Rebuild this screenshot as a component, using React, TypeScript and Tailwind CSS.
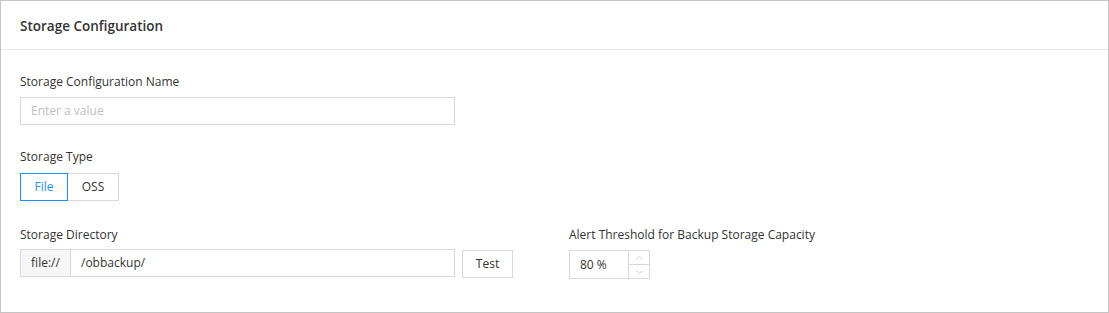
import React from "react";

export default function App() {
  return (
    <div
      className="w-[1109px] h-[313px] bg-white border border-[#c4c4c4] text-[12px] text-[#333]"
      style={{ fontFamily: '"Open Sans", "Noto Sans", sans-serif' }}
    >
      <div className="h-[49px] border-b border-[#e8e8e8] flex items-center pt-[2px] px-[19px]">
        <span className="text-[13.5px] font-semibold text-[#333]">Storage Configuration</span>
      </div>
      <div className="px-[19px] pt-[22px]">
        <div className="leading-[20px]">Storage Configuration Name</div>
        <div className="mt-[5px] w-[435px] h-[28px] border border-[#d9d9d9] flex items-center px-[10px] text-[#bfbfbf]">
          Enter a value
        </div>

        <div className="mt-[22px] leading-[20px]">Storage Type</div>
        <div className="mt-[6px] flex h-[28px]">
          <div className="w-[48px] border border-[#1890ff] text-[#1890ff] flex items-center justify-center">File</div>
          <div className="w-[51px] border border-l-0 border-[#d9d9d9] flex items-center justify-center">OSS</div>
        </div>

        <div className="mt-[24px] flex gap-[19px]">
          <div className="w-[530px]">
            <div className="leading-[20px]">Storage Directory</div>
            <div className="mt-[4px] flex items-start gap-[7px]">
              <div className="w-[435px] h-[28px] border border-[#d9d9d9] flex">
                <div className="w-[50px] bg-[#f7f7f7] border-r border-[#d9d9d9] flex items-center justify-center">file://</div>
                <div className="flex-1 flex items-center px-[10px]">/obbackup/</div>
              </div>
              <div className="mt-[1px] w-[51px] h-[28px] border border-[#d9d9d9] flex items-center justify-center">Test</div>
            </div>
          </div>
          <div>
            <div className="leading-[20px]">Alert Threshold for Backup Storage Capacity</div>
            <div className="mt-[5px] w-[81px] h-[29px] border border-[#d9d9d9] flex">
              <div className="flex-1 flex items-center px-[10px]">80 %</div>
              <div className="w-[21px] border-l border-[#d9d9d9] flex flex-col">
                <div className="flex-1 border-b border-[#d9d9d9] flex items-center justify-center">
                  <svg width="7" height="4" viewBox="0 0 7 4"><path d="M0.5 3.5 L3.5 0.5 L6.5 3.5" fill="none" stroke="#bfbfbf" strokeWidth="0.8" /></svg>
                </div>
                <div className="flex-1 flex items-center justify-center">
                  <svg width="7" height="4" viewBox="0 0 7 4"><path d="M0.5 0.5 L3.5 3.5 L6.5 0.5" fill="none" stroke="#bfbfbf" strokeWidth="0.8" /></svg>
                </div>
              </div>
            </div>
          </div>
        </div>
      </div>
    </div>
  );
}
